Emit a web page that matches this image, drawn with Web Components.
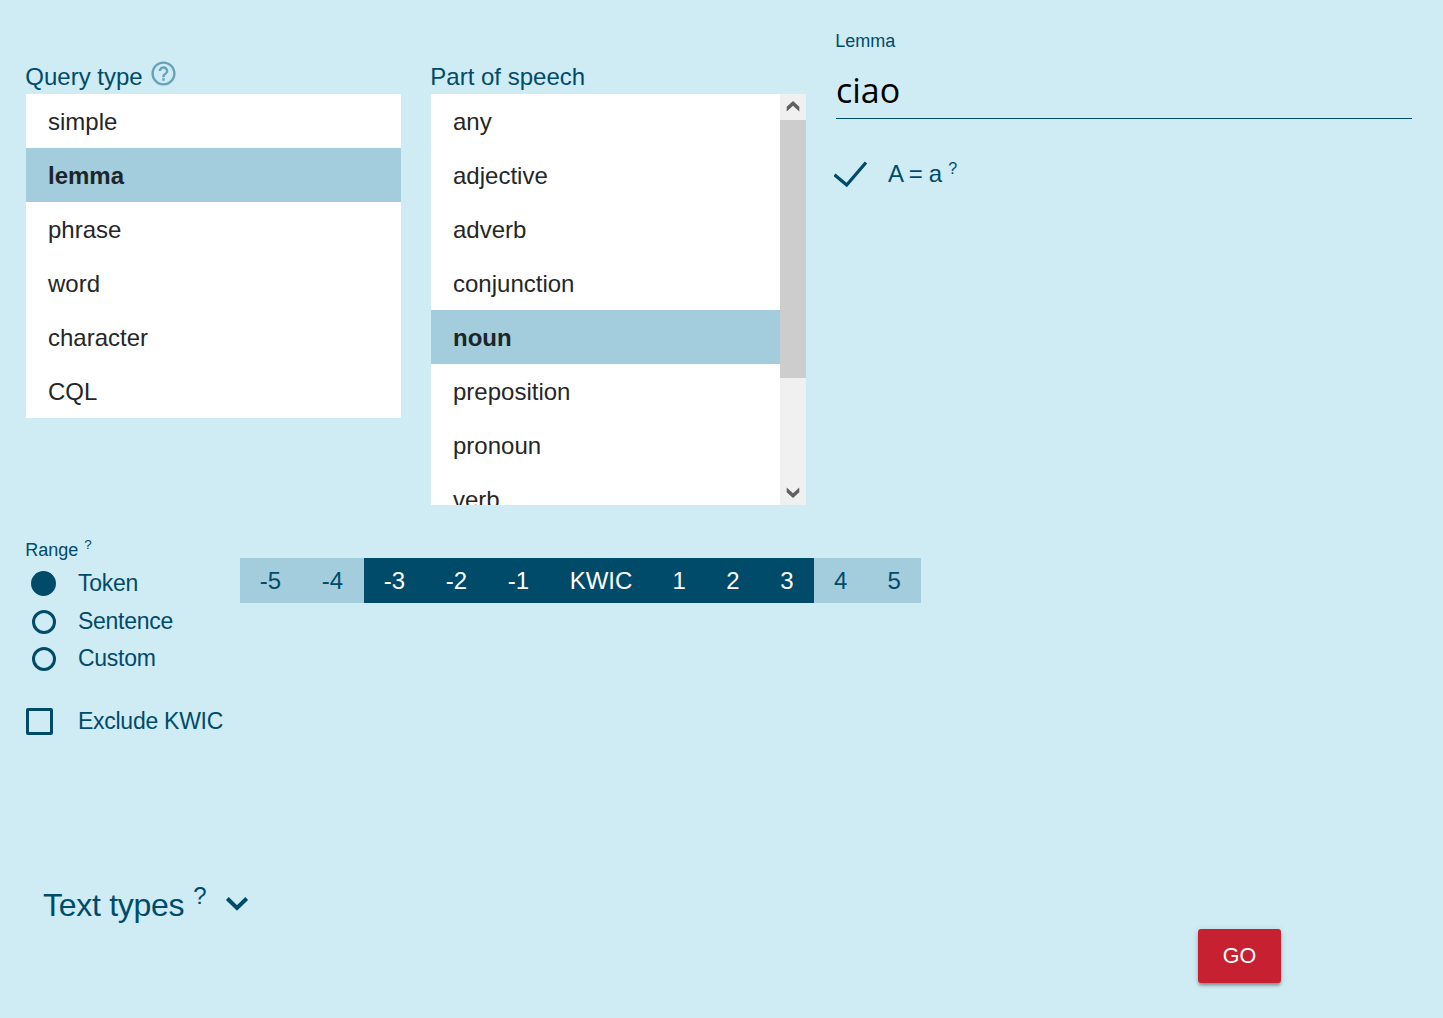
<!DOCTYPE html>
<html lang="en">
<head>
<meta charset="utf-8">
<title>Concordance</title>
<style>
html,body{margin:0;height:100%}
body{background:#cfebf4;font-family:"Liberation Sans",Arial,sans-serif;color:#004b69;overflow:hidden}
</style>
</head>
<body>
<query-page></query-page>
<script>
const define = (name, html, setup) => customElements.define(name, class extends HTMLElement {
  constructor() {
    super();
    this.attachShadow({mode: 'open'}).innerHTML = html;
  }
  connectedCallback() { if (setup) setup(this, this.shadowRoot); }
});

define('list-option', `<style>
:host{display:block;height:54px;line-height:55px;padding-left:22px;font-size:24px;color:#262626;background:#fff;box-sizing:border-box}
:host([selected]){background:#a3ccdc;font-weight:bold;color:#1c2529}
</style><slot></slot>`);

define('option-list', `<style>
:host{display:block;width:375px;flex:none}
.label{height:34px;line-height:34px;font-size:24px;display:flex;gap:8px;white-space:nowrap;margin-left:-.7px}
.box{display:flex;overflow:hidden}
.items{flex:1;overflow:hidden}
.bar{display:none;width:26px;background:#f0f0f0;flex-direction:column}
.thumb{height:258px;background:#cdcdcd}
.bar svg{display:block;width:26px;height:26px}
.space{flex:1}
:host([scroll]) .box{height:411px}
:host([scroll]) .bar{display:flex}
path{fill:#606060}
</style>
<div class="label"><span id="l"></span><slot name="icon"></slot></div>
<div class="box"><div class="items"><slot></slot></div>
<div class="bar"><svg viewBox="0 0 26 26"><path d="M13 7 19.300 12.800V17.500L13 11.700 6.700 17.500V12.800z"/></svg><div class="thumb"></div><div class="space"></div><svg viewBox="0 0 26 26"><path d="M13 19 19.300 13.200V8.500L13 14.300 6.700 8.500V13.200z"/></svg></div></div>`,
(el, r) => { r.getElementById('l').textContent = el.getAttribute('label'); });

define('help-icon', `<style>:host{display:block}svg{display:block;width:29px;height:29px;fill:#69a1b6}</style>
<svg viewBox="0 0 24 24"><path d="M11 18h2v-2h-2v2zm1-16C6.480 2 2 6.480 2 12s4.480 10 10 10 10-4.480 10-10S17.520 2 12 2zm0 18c-4.410 0-8-3.590-8-8s3.590-8 8-8 8 3.590 8 8-3.590 8-8 8zm0-14c-2.210 0-4 1.790-4 4h2c0-1.100.9-2 2-2s2 .9 2 2c0 2-3 1.750-3 5h2c0-2.250 3-2.500 3-5 0-2.210-1.790-4-4-4z"/></svg>`);

define('lemma-field', `<style>
:host{display:block;width:576px}
.label{font-size:18px;line-height:20px;height:20px;margin-left:-.7px}
.value{height:67px;font:34px/78px "Open Sans","Noto Sans",sans-serif;color:#000;border-bottom:1px solid #004b69}
.case{display:flex;height:40px;margin-top:35px;align-items:flex-start}
svg{width:34px;height:28px;margin:7px 0 0 -2px;flex:none}
.text{font-size:24px;line-height:40px;margin-left:20px;letter-spacing:-.35px}
.q{font-size:16px;line-height:29px;margin-left:6.500px}
</style>
<div class="label">Lemma</div><div class="value">ciao</div>
<div class="case"><svg viewBox="0 0 34 28"><path d="M.5 13.700 12.700 24 32 1.500" fill="none" stroke="#004b69" stroke-width="3.300"/></svg><span class="text">A = a</span><span class="q">?</span></div>`);

define('choice-item', `<style>
:host{display:flex;align-items:center;height:37.5px;font-size:23px;letter-spacing:-.27px;white-space:nowrap}
.slot{width:52px;flex:none}
i{display:block;box-sizing:border-box;border:3px solid #004b69;width:24px;height:24px;border-radius:50%;margin:1px 0 0 6px}
:host([checked]) i{background:#004b69;width:25px;height:25px;margin:0 0 0 5px}
:host([square]) i{width:27px;height:27px;border-radius:2px;margin:1px 0 0 0}
</style><div class="slot"><i></i></div><span><slot></slot></span>`);

define('range-choice', `<style>
:host{display:block;width:214px}
.label{display:flex;font-size:18px;height:25px;line-height:20px;margin-left:-.7px}
.label sup{font-size:13.500px;line-height:9px;margin-left:6px;vertical-align:baseline}
choice-item[square]{margin-top:25px}
</style><div class="label"><span>Range</span><sup>?</sup></div>
<choice-item checked>Token</choice-item><choice-item>Sentence</choice-item><choice-item>Custom</choice-item><choice-item square>Exclude KWIC</choice-item>`);

define('kwic-range', `<style>
:host{display:flex;height:45px;line-height:46px;font-size:24px;width:681px;background:#a3ccdc}
span{text-align:center;flex:none;width:53.600px;box-sizing:border-box;padding-right:1px}
.n{width:62px}.k{width:103px}.on{background:#004b69;color:#fff}
.group{display:flex;width:450px}
.r{padding-right:0}
</style><span class="n">-5</span><span class="n">-4</span><div class="group on"><span class="n">-3</span><span class="n">-2</span><span class="n">-1</span><span class="k">KWIC</span><span>1</span><span>2</span><span class="r">3</span></div><span class="r">4</span><span class="r">5</span>`);

define('text-types', `<style>
:host{display:flex;height:50px;font-size:32px;line-height:50px;color:#004b69}
.t{letter-spacing:-.28px}
.q{font-size:24px;line-height:32px;margin-left:9px}
svg{width:24px;height:16px;margin:16px 0 0 18px}
</style><span class="t">Text types</span><span class="q">?</span><svg viewBox="0 0 24 16"><path d="M2.300 2.500 12 12l9.700-9.500" fill="none" stroke="#004b69" stroke-width="4"/></svg>`);

define('go-button', `<style>
:host{display:block;width:83px;height:54px}
button{display:block;width:100%;height:100%;border:0;border-radius:3px;padding:0;background:#c62031;color:#fff;font:21.500px/54px "Liberation Sans",Arial,sans-serif;box-shadow:0 3px 3px rgba(0,0,0,.14),0 1px 7px rgba(0,0,0,.12),0 3px 3px -1px rgba(0,0,0,.2)}
</style><button><slot></slot></button>`);

define('query-page', `<style>
:host{display:flex;flex-direction:column;width:1443px;height:1018px;box-sizing:border-box;padding:31px 31px 35px 26px}
.top{display:flex;gap:30px;height:474px}
option-list{margin-top:29px}
help-icon{margin:-1px 0 0 -1.500px}
.range{display:flex;margin-top:35px;height:340px}
kwic-range{margin-top:18px}
text-types{margin-left:17px}
.foot{display:flex;justify-content:flex-end;margin-right:131px;margin-top:-1px}
</style>
<div class="top">
<option-list label="Query type"><help-icon slot="icon"></help-icon>
<list-option>simple</list-option><list-option selected>lemma</list-option><list-option>phrase</list-option><list-option>word</list-option><list-option>character</list-option><list-option>CQL</list-option></option-list>
<option-list label="Part of speech" scroll>
<list-option>any</list-option><list-option>adjective</list-option><list-option>adverb</list-option><list-option>conjunction</list-option><list-option selected>noun</list-option><list-option>preposition</list-option><list-option>pronoun</list-option><list-option>verb</list-option></option-list>
<lemma-field></lemma-field>
</div>
<div class="range"><range-choice></range-choice><kwic-range></kwic-range></div>
<text-types></text-types>
<div class="foot"><go-button>GO</go-button></div>`);
</script>
</body>
</html>
